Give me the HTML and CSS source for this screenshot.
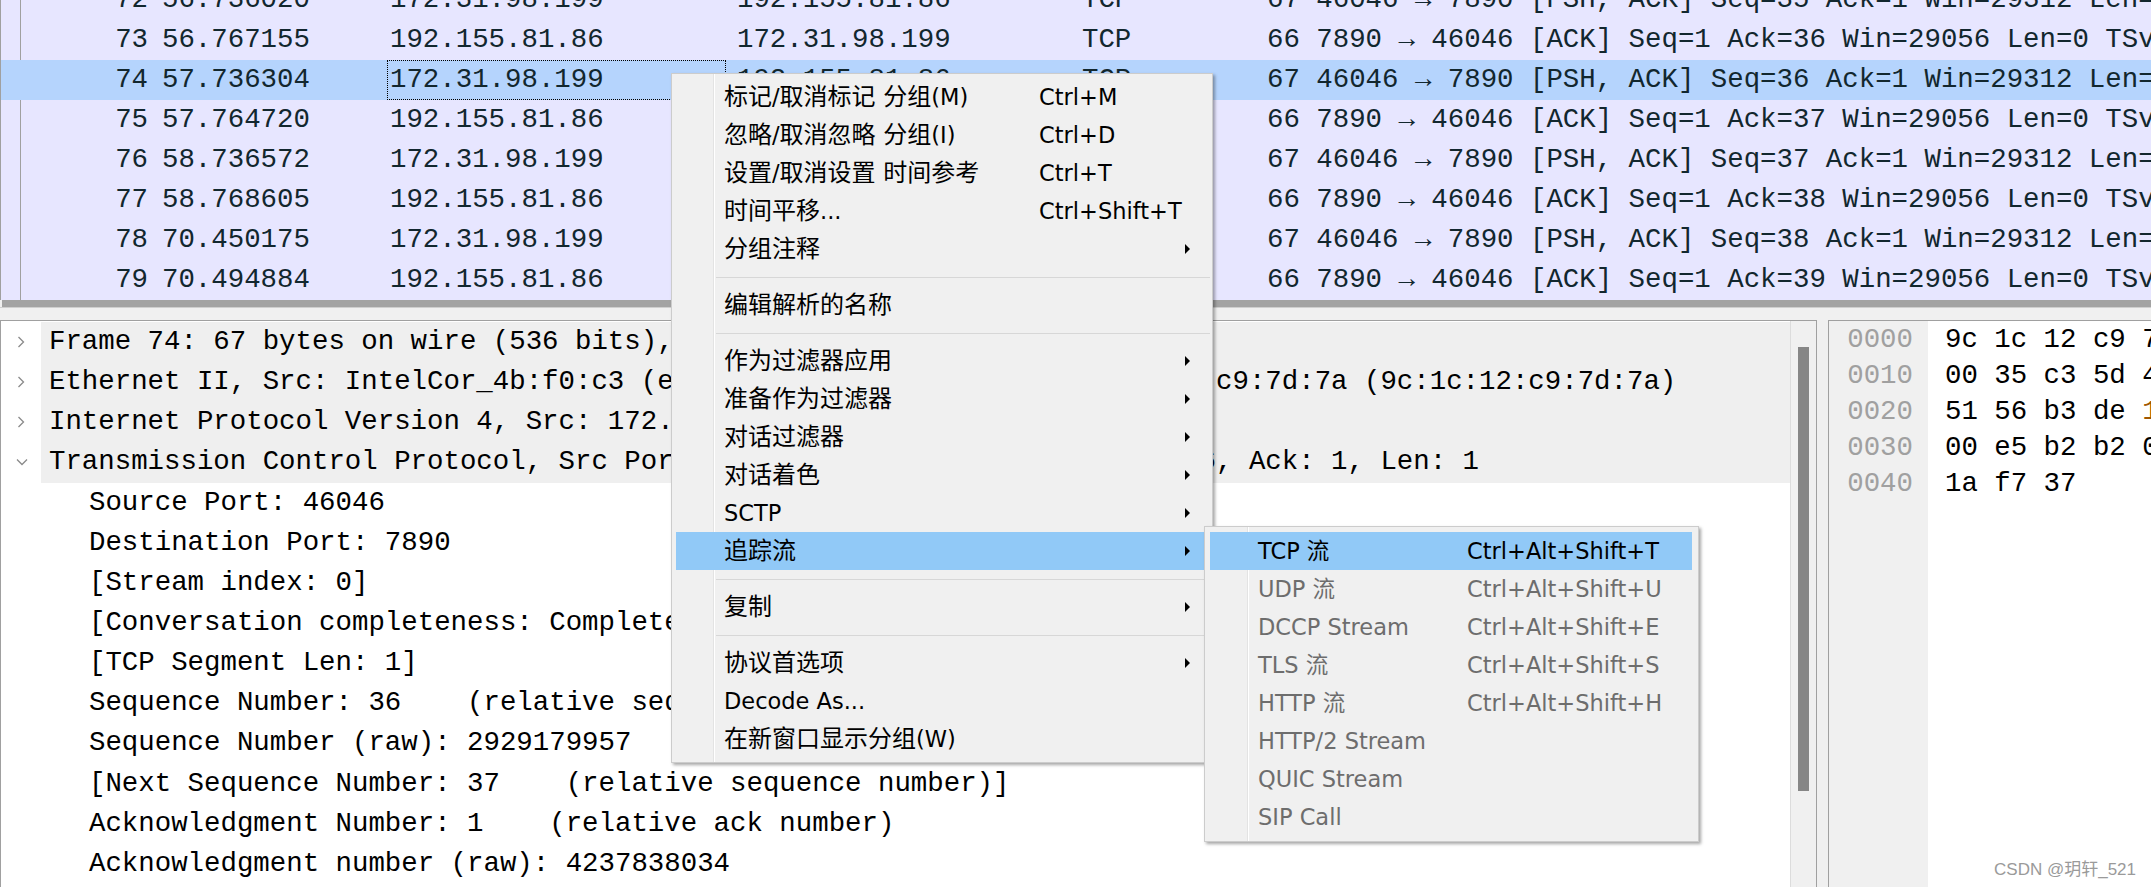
FILE: index.html
```html
<!DOCTYPE html>
<html lang="zh-CN">
<head>
<meta charset="utf-8">
<title>Wireshark</title>
<link rel="stylesheet" href="styles.css">
</head>
<body>
<div class="packet-list">
  <div class="rows">
    <div class="row"><span class="c0"></span><span class="no">72</span><span class="time">56.736020</span><span class="src">172.31.98.199</span><span class="dst">192.155.81.86</span><span class="proto">TCP</span><span class="info">67 46046 → 7890 [PSH, ACK] Seq=35 Ack=1 Win=29312 Len=1 TSval=3212</span></div>
    <div class="row"><span class="c0"></span><span class="no">73</span><span class="time">56.767155</span><span class="src">192.155.81.86</span><span class="dst">172.31.98.199</span><span class="proto">TCP</span><span class="info">66 7890 → 46046 [ACK] Seq=1 Ack=36 Win=29056 Len=0 TSval=1233</span></div>
    <div class="row sel"><span class="c0"></span><span class="no">74</span><span class="time">57.736304</span><span class="src">172.31.98.199</span><span class="dst">192.155.81.86</span><span class="proto">TCP</span><span class="info">67 46046 → 7890 [PSH, ACK] Seq=36 Ack=1 Win=29312 Len=1 TSval=3212</span></div>
    <div class="row"><span class="c0"></span><span class="no">75</span><span class="time">57.764720</span><span class="src">192.155.81.86</span><span class="dst">172.31.98.199</span><span class="proto">TCP</span><span class="info">66 7890 → 46046 [ACK] Seq=1 Ack=37 Win=29056 Len=0 TSval=1233</span></div>
    <div class="row"><span class="c0"></span><span class="no">76</span><span class="time">58.736572</span><span class="src">172.31.98.199</span><span class="dst">192.155.81.86</span><span class="proto">TCP</span><span class="info">67 46046 → 7890 [PSH, ACK] Seq=37 Ack=1 Win=29312 Len=1 TSval=3212</span></div>
    <div class="row"><span class="c0"></span><span class="no">77</span><span class="time">58.768605</span><span class="src">192.155.81.86</span><span class="dst">172.31.98.199</span><span class="proto">TCP</span><span class="info">66 7890 → 46046 [ACK] Seq=1 Ack=38 Win=29056 Len=0 TSval=1233</span></div>
    <div class="row"><span class="c0"></span><span class="no">78</span><span class="time">70.450175</span><span class="src">172.31.98.199</span><span class="dst">192.155.81.86</span><span class="proto">TCP</span><span class="info">67 46046 → 7890 [PSH, ACK] Seq=38 Ack=1 Win=29312 Len=1 TSval=3212</span></div>
    <div class="row"><span class="c0"></span><span class="no">79</span><span class="time">70.494884</span><span class="src">192.155.81.86</span><span class="dst">172.31.98.199</span><span class="proto">TCP</span><span class="info">66 7890 → 46046 [ACK] Seq=1 Ack=39 Win=29056 Len=0 TSval=1233</span></div>
  </div>
</div>
<div class="hscroll"></div>
<div class="split"></div>
<div class="panes">
  <div class="detail">
    <div class="tree">
      <div class="trow top"><span class="arrow"><svg width="8" height="12" viewBox="0 0 8 12"><polyline points="1.5,1 6.5,6 1.5,11" fill="none" stroke="#8a8a8a" stroke-width="1.3"/></svg></span><span class="label">Frame 74: 67 bytes on wire (536 bits), 67 bytes captured (536 bits)</span></div>
      <div class="trow top"><span class="arrow"><svg width="8" height="12" viewBox="0 0 8 12"><polyline points="1.5,1 6.5,6 1.5,11" fill="none" stroke="#8a8a8a" stroke-width="1.3"/></svg></span><span class="label">Ethernet II, Src: IntelCor_4b:f0:c3 (e8:6a:64:4b:f0:c3), Dst: 9c:1c:12:c9:7d:7a (9c:1c:12:c9:7d:7a)</span></div>
      <div class="trow top"><span class="arrow"><svg width="8" height="12" viewBox="0 0 8 12"><polyline points="1.5,1 6.5,6 1.5,11" fill="none" stroke="#8a8a8a" stroke-width="1.3"/></svg></span><span class="label">Internet Protocol Version 4, Src: 172.31.98.199, Dst: 192.155.81.86</span></div>
      <div class="trow top"><span class="arrow down"><svg width="12" height="8" viewBox="0 0 12 8"><polyline points="1,1.5 6,6.5 11,1.5" fill="none" stroke="#8a8a8a" stroke-width="1.3"/></svg></span><span class="label">Transmission Control Protocol, Src Port: 46046, Dst Port: 7890, Seq: 36, Ack: 1, Len: 1</span></div>
      <div class="trow child"><span class="arrow"></span><span class="label">Source Port: 46046</span></div>
      <div class="trow child"><span class="arrow"></span><span class="label">Destination Port: 7890</span></div>
      <div class="trow child"><span class="arrow"></span><span class="label">[Stream index: 0]</span></div>
      <div class="trow child"><span class="arrow"></span><span class="label">[Conversation completeness: Complete, WITH_DATA (31)]</span></div>
      <div class="trow child"><span class="arrow"></span><span class="label">[TCP Segment Len: 1]</span></div>
      <div class="trow child"><span class="arrow"></span><span class="label">Sequence Number: 36    (relative sequence number)</span></div>
      <div class="trow child"><span class="arrow"></span><span class="label">Sequence Number (raw): 2929179957</span></div>
      <div class="trow child"><span class="arrow"></span><span class="label">[Next Sequence Number: 37    (relative sequence number)]</span></div>
      <div class="trow child"><span class="arrow"></span><span class="label">Acknowledgment Number: 1    (relative ack number)</span></div>
      <div class="trow child"><span class="arrow"></span><span class="label">Acknowledgment number (raw): 4237838034</span></div>
      <div class="trow child"><span class="arrow"></span><span class="label">1000 .... = Header Length: 32 bytes (8)</span></div>
    </div>
    <div class="vscroll"><div class="thumb"></div></div>
  </div>
  <div class="hex">
    <div class="offsets">
      <div class="hline">0000</div>
      <div class="hline">0010</div>
      <div class="hline">0020</div>
      <div class="hline">0030</div>
      <div class="hline">0040</div>
    </div>
    <div class="bytes">
      <div class="hline">9c 1c 12 c9 7d 7a e8 6a 64 4b f0 c3 08 00 45 00</div>
      <div class="hline">00 35 c3 5d 40 00 40 06 00 00 ac 1f 62 c7 c0 9b</div>
      <div class="hline">51 56 b3 de <span class="hl-byte">1e</span> d2 ae 99 4b 25 fc 93 c2 42 80 18</div>
      <div class="hline">00 e5 b2 b2 00 00 01 01 08 0a bf 70 2f 6b 49 73</div>
      <div class="hline">1a f7 37</div>
    </div>
  </div>
</div>

<div class="menu">
  <div class="mi"><span>标记<span class="lat">/</span>取消标记 分组<span class="lat">(M)</span></span><span class="sc">Ctrl+M</span><span></span></div>
  <div class="mi"><span>忽略<span class="lat">/</span>取消忽略 分组<span class="lat">(I)</span></span><span class="sc">Ctrl+D</span><span></span></div>
  <div class="mi"><span>设置<span class="lat">/</span>取消设置 时间参考</span><span class="sc">Ctrl+T</span><span></span></div>
  <div class="mi"><span>时间平移<span class="lat">...</span></span><span class="sc">Ctrl+Shift+T</span><span></span></div>
  <div class="mi"><span>分组注释</span><span></span><span class="arr"></span></div>
  <div class="sep"></div>
  <div class="mi"><span>编辑解析的名称</span><span></span><span></span></div>
  <div class="sep"></div>
  <div class="mi"><span>作为过滤器应用</span><span></span><span class="arr"></span></div>
  <div class="mi"><span>准备作为过滤器</span><span></span><span class="arr"></span></div>
  <div class="mi"><span>对话过滤器</span><span></span><span class="arr"></span></div>
  <div class="mi"><span>对话着色</span><span></span><span class="arr"></span></div>
  <div class="mi"><span class="lat">SCTP</span><span></span><span class="arr"></span></div>
  <div class="mi hl"><span>追踪流</span><span></span><span class="arr"></span></div>
  <div class="sep"></div>
  <div class="mi"><span>复制</span><span></span><span class="arr"></span></div>
  <div class="sep"></div>
  <div class="mi"><span>协议首选项</span><span></span><span class="arr"></span></div>
  <div class="mi"><span class="lat">Decode As...</span><span></span><span></span></div>
  <div class="mi"><span>在新窗口显示分组<span class="lat">(W)</span></span><span></span><span></span></div>
</div>

<div class="submenu">
  <div class="mi hl"><span>TCP 流</span><span>Ctrl+Alt+Shift+T</span></div>
  <div class="mi dis"><span>UDP 流</span><span>Ctrl+Alt+Shift+U</span></div>
  <div class="mi dis"><span>DCCP Stream</span><span>Ctrl+Alt+Shift+E</span></div>
  <div class="mi dis"><span>TLS 流</span><span>Ctrl+Alt+Shift+S</span></div>
  <div class="mi dis"><span>HTTP 流</span><span>Ctrl+Alt+Shift+H</span></div>
  <div class="mi dis"><span>HTTP/2 Stream</span><span></span></div>
  <div class="mi dis"><span>QUIC Stream</span><span></span></div>
  <div class="mi dis"><span>SIP Call</span><span></span></div>
</div>

<div class="wm">CSDN @玥轩_521</div>
</body>
</html>
```

FILE: styles.css
```css
* { box-sizing: border-box; }
html, body { margin: 0; padding: 0; }
body {
  width: 2151px;
  height: 887px;
  overflow: hidden;
  position: relative;
  background: #f0f0f0;
  font-family: "Liberation Mono", "DejaVu Sans Mono", monospace;
}

/* ---------- packet list ---------- */
.packet-list {
  height: 300px;
  overflow: hidden;
  background: #e7e6ff;
  border-left: 1px solid #a0a0a0;
  color: #12272e;
  font-size: 27.4px;
}
.rows { margin-top: -20px; }
.row {
  display: grid;
  grid-template-columns: 20px 127px 239px 339px 353px 185px 1fr;
  height: 40px;
  line-height: 40px;
  white-space: pre;
}
.row > span { overflow: hidden; }
.c0 { border-right: 1px solid #a0a0a0; }
.no { text-align: right; }
.time { padding-left: 14px; }
.src { padding-left: 3px; }
.dst { padding-left: 11px; }
.proto { padding-left: 3px; }
.info { padding-left: 3px; }
.row.sel { background: #b5d4fd; }
.row.sel .c0 { border-right-color: transparent; }
.row.sel .src { outline: 1px dotted #000; outline-offset: -1px; }

.hscroll { height: 7px; background: #a3a3a3; margin-left: 2px; }
.split { height: 13px; border-top: 1px solid #cfcfcf; }

/* ---------- panes ---------- */
.panes { display: flex; height: 567px; gap: 11px; }
.detail {
  width: 1817px;
  flex: none;
  display: flex;
  background: #fff;
  border: 1px solid #a0a0a0;
  border-bottom: none;
}
.tree {
  flex: 1;
  padding-top: 1px;
  overflow: hidden;
  font-size: 27.4px;
  color: #000;
}
.trow {
  display: flex;
  height: 40.15px;
  line-height: 40px;
  white-space: pre;
}
.arrow {
  width: 40px;
  flex: none;
  display: flex;
  align-items: center;
  padding-left: 16px;
  background: #fff;
}
.arrow.down { padding-left: 15px; }
.label { flex: 1; overflow: hidden; }
.trow.top .label { background: #efefef; padding-left: 8px; }
.trow.child .label { padding-left: 48px; }

.vscroll {
  width: 26px;
  flex: none;
  background: #f0f0f0;
  border-left: 1px solid #dcdcdc;
  padding: 26px 0 0 7px;
}
.thumb { width: 11px; height: 444px; background: #868686; }

.hex {
  flex: 1;
  display: flex;
  overflow: hidden;
  background: #fff;
  border-left: 1px solid #a0a0a0;
  border-top: 1px solid #a0a0a0;
  font-size: 27.4px;
  color: #000;
}
.offsets {
  width: 99px;
  flex: none;
  background: #f0f0f0;
  color: #a0a0a0;
  text-align: right;
  padding: 1px 15px 0 0;
}
.bytes { padding: 1px 0 0 17px; }
.hline { height: 36px; line-height: 36px; white-space: pre; }
.hl-byte { color: #a05800; }

/* ---------- context menus ---------- */
.menu, .submenu {
  position: absolute;
  background-color: #f0f0f0;
  border: 1px solid #cccccc;
  box-shadow: 2px 2px 3px rgba(0, 0, 0, 0.35);
  font-family: "DejaVu Sans", "Noto Sans CJK SC", sans-serif;
  color: #000;
}
.menu {
  left: 671px;
  top: 73px;
  width: 542px;
  padding: 4px 8px 4px 4px;
  font-size: 24px;
  background-image: linear-gradient(to right, transparent 41px, #e3e3e3 41px, #e3e3e3 42px, #ffffff 42px, #ffffff 43px, transparent 43px);
}
.submenu {
  left: 1204px;
  top: 526px;
  width: 495px;
  padding: 5px 6px 5px 5px;
  font-size: 22.5px;
  background-image: linear-gradient(to right, transparent 42px, #e3e3e3 42px, #e3e3e3 43px, #ffffff 43px, #ffffff 44px, transparent 44px);
}
.lat, .sc { font-size: 22.5px; }
.mi {
  display: grid;
  align-items: center;
  height: 38px;
  line-height: 38px;
  white-space: nowrap;
}
.menu .mi { grid-template-columns: 315px 1fr 5px; padding: 0 14px 0 48px; }
.submenu .mi { grid-template-columns: 209px 1fr; padding: 0 10px 0 48px; }
.mi.hl { background: #91c9f7; }
.mi.dis { color: #6d6d6d; }
.arr {
  width: 0;
  height: 0;
  border-left: 5px solid #000;
  border-top: 5px solid transparent;
  border-bottom: 5px solid transparent;
}
.sep {
  height: 18px;
  display: flex;
  align-items: center;
  margin: 0 -6px 0 40px;
}
.sep::after {
  content: "";
  flex: 1;
  height: 1px;
  background: #d7d7d7;
}

.wm {
  position: absolute;
  right: 15px;
  bottom: 7px;
  font-family: "Liberation Sans", "Noto Sans CJK SC", sans-serif;
  font-size: 17px;
  color: #9a9a9a;
}
```
